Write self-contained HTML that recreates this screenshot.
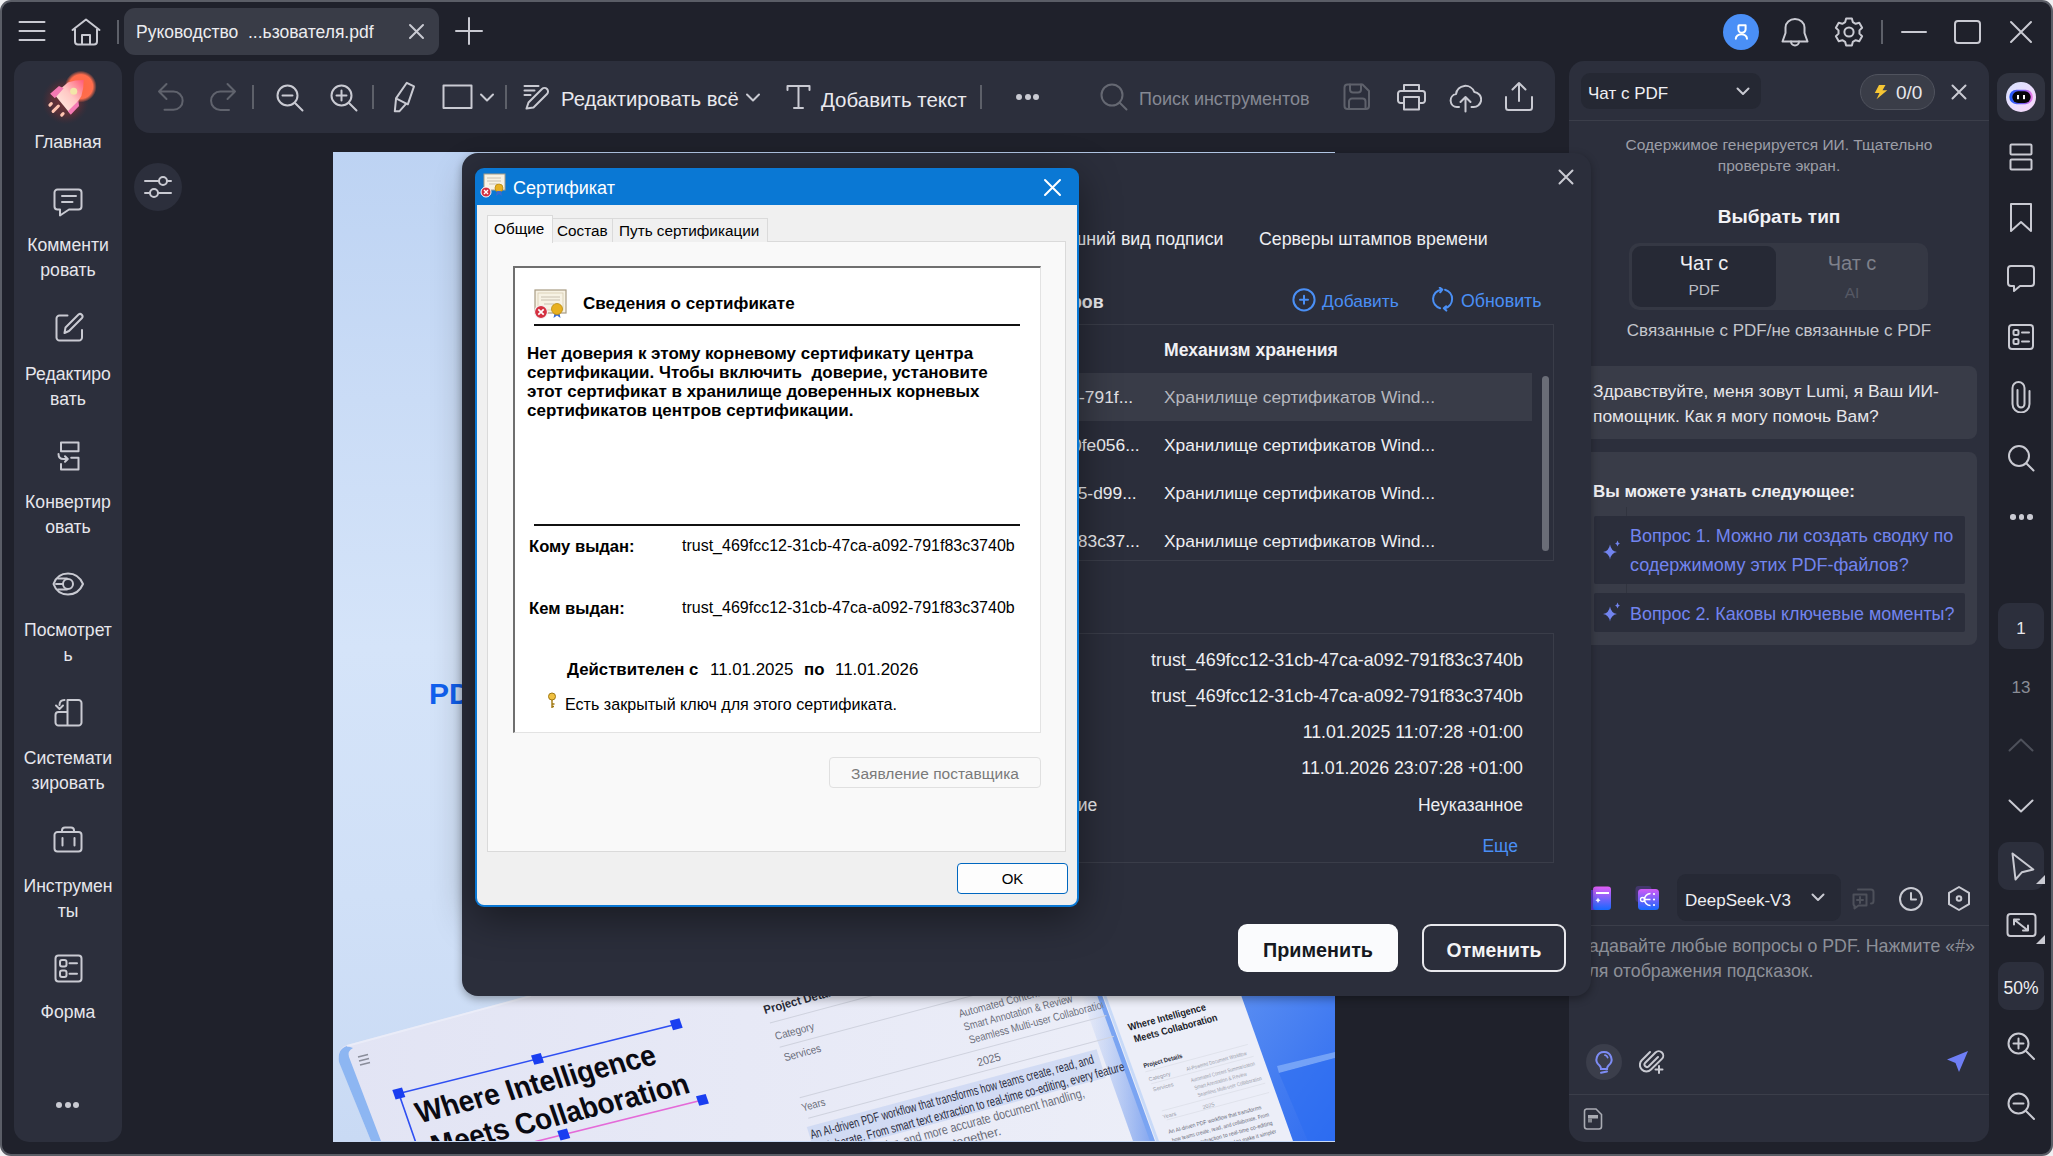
<!DOCTYPE html>
<html><head><meta charset="utf-8">
<style>
*{box-sizing:border-box;margin:0;padding:0}
html,body{width:2053px;height:1156px;overflow:hidden;background:#f0f0f2;font-family:"Liberation Sans",sans-serif}
.a{position:absolute}
#win{position:absolute;left:0;top:0;width:2053px;height:1156px;background:#1f212b;border:2px solid #5a5d66;border-radius:11px;overflow:hidden}
.ic{position:absolute;fill:none;stroke:#c9cad2;stroke-width:2;stroke-linecap:round;stroke-linejoin:round}
.t{position:absolute;white-space:pre;color:#e9e9ee}
.sbl{left:14px;width:108px;text-align:center;font-size:17.6px;color:#e6e6ec}
</style></head><body>
<div id="win">
</div>
<!-- everything positioned relative to body -->
<div class="a" style="left:0;top:0;width:2053px;height:1156px">

<!-- tab -->
<div class="a" style="left:124px;top:8px;width:315px;height:47px;background:#393c47;border-radius:11px"></div>

<!-- top bar -->
<svg class="ic" style="left:17px;top:20px" width="30" height="24" viewBox="0 0 30 24" stroke-width="2.4"><path d="M2.5 2h25M2.5 11h25M2.5 20h25"/></svg>
<svg class="ic" style="left:70px;top:16px" width="32" height="31" viewBox="0 0 32 31" stroke-width="2.2"><path d="M2.5 14L16 3.5 29.5 14M5 12V25.5a3 3 0 0 0 3 3h16a3 3 0 0 0 3-3V12M12 28.5V19h8v9.5"/></svg>
<div class="a" style="left:117px;top:20px;width:2px;height:24px;background:#5d6069"></div>
<div class="t" style="left:136px;top:22px;font-size:17.5px;color:#ececf0">Руководство  ...ьзователя.pdf</div>
<svg class="ic" style="left:408px;top:23px" width="17" height="17" viewBox="0 0 17 17" stroke-width="1.8"><path d="M2 2l13 13M15 2L2 15"/></svg>
<svg class="ic" style="left:454px;top:16px" width="30" height="30" viewBox="0 0 30 30" stroke-width="2.1"><path d="M15 2v26M2 15h26"/></svg>

<div class="a" style="left:1723px;top:14px;width:36px;height:36px;border-radius:50%;background:#4a8ff6"></div>
<svg class="ic" style="left:1729px;top:20px;stroke:#fff" width="24" height="24" viewBox="0 0 24 24" stroke-width="1.3"><path d="M10.3 5.2h6.3v4a3.6 3.6 0 0 1-7.2 0V6.2a1 1 0 0 1 .9-1z"/><path d="M6.8 18.8a5.6 4.6 0 0 1 11.2 0"/></svg>
<svg class="ic" style="left:1780px;top:17px" width="30" height="31" viewBox="0 0 30 31" stroke-width="1.9"><path d="M5.5 10.5A9.5 8.5 0 0 1 24.5 10.5V16l3 8.5H2.5l3-8.5z"/><path d="M11 24.5a4 4 0 0 0 8 0"/></svg>
<svg class="ic" style="left:1833px;top:16px" width="32" height="32" viewBox="0 0 32 32" stroke-width="1.9"><path d="M13.13 2.50 L18.87 2.50 L19.80 6.10 L22.67 7.76 L26.26 6.77 L29.12 11.74 L26.47 14.34 L26.47 17.66 L29.12 20.26 L26.26 25.23 L22.67 24.24 L19.80 25.90 L18.87 29.50 L13.13 29.50 L12.20 25.90 L9.33 24.24 L5.74 25.23 L2.88 20.26 L5.53 17.66 L5.53 14.34 L2.88 11.74 L5.74 6.77 L9.33 7.76 L12.20 6.10z"/><circle cx="16" cy="16" r="4.6"/></svg>
<div class="a" style="left:1881px;top:20px;width:2px;height:24px;background:#5d6069"></div>
<svg class="ic" style="left:1900px;top:30px" width="28" height="4" viewBox="0 0 28 4" stroke-width="2"><path d="M2 2h24"/></svg>
<svg class="ic" style="left:1953px;top:19px" width="29" height="26" viewBox="0 0 29 26" stroke-width="2"><rect x="2" y="2" width="25" height="22" rx="3"/></svg>
<svg class="ic" style="left:2009px;top:20px" width="24" height="24" viewBox="0 0 24 24" stroke-width="2"><path d="M2 2l20 20M22 2L2 22"/></svg>

<!-- left sidebar -->
<div class="a" style="left:14px;top:61px;width:108px;height:1081px;background:#2c2f3c;border-radius:15px"></div>

<!-- sidebar content -->
<svg class="a" style="left:36px;top:63px" width="66" height="66" viewBox="2 2 56 56">
<defs><radialGradient id="rg1" cx="0.5" cy="0.5" r="0.5"><stop offset="0" stop-color="#ff6845"/><stop offset="0.75" stop-color="#ff6d4c"/><stop offset="1" stop-color="#ff6d4c" stop-opacity="0"/></radialGradient>
<radialGradient id="rg2" cx="0.5" cy="0.5" r="0.5"><stop offset="0" stop-color="#7a3538" stop-opacity=".95"/><stop offset="0.6" stop-color="#6a3036" stop-opacity=".7"/><stop offset="1" stop-color="#4a2a34" stop-opacity="0"/></radialGradient>
<linearGradient id="lg1" x1="0" y1="1" x2="1" y2="0"><stop offset="0" stop-color="#fff6ea"/><stop offset="0.55" stop-color="#ffc8c4"/><stop offset="1" stop-color="#ff5a78"/></linearGradient></defs>
<circle cx="27" cy="34" r="20" fill="url(#rg2)"/>
<circle cx="40" cy="22" r="13.5" fill="url(#rg1)"/>
<path d="M17.5 28.5L29 18.5q6-2 13.5-2q0 7.5-2 13.5L31 45z" fill="url(#lg1)"/>
<path d="M14 28l7.5-6.5 4 2-7.5 8.5zM31.5 46l7-7.5-0.5-4.5-9 9z" fill="#f47ab4"/>
<circle cx="34" cy="26" r="3" fill="#f3e6a8"/>
<path d="M15 36.5l-1.2 1.2M21 38.5l-4.5 4.5M25 45l-1.2 1.2" stroke="#ffc4b0" stroke-width="2.6" stroke-linecap="round"/>
</svg>
<div class="t sbl" style="top:132px">Главная</div>
<svg class="ic" style="left:50px;top:185px" width="36" height="32" viewBox="0 0 36 32" stroke-width="2.5"><path d="M7.5 4.5h21a3 3 0 0 1 3 3v14a3 3 0 0 1-3 3H19l-9 6v-6H7.5a3 3 0 0 1-3-3v-14a3 3 0 0 1 3-3zM12 11h14M12 17h10.5"/></svg>
<div class="t sbl" style="top:233px;line-height:25px;text-align:center">Комменти<br>ровать</div>
<svg class="ic" style="left:52px;top:311px" width="34" height="33" viewBox="0 0 34 33" stroke-width="2.5"><path d="M15.5 4.5H7.5a3 3 0 0 0-3 3v19a3 3 0 0 0 3 3h19.5a3 3 0 0 0 3-3V19"/><path d="M12.5 22l1-5.5L26.5 3.5a2.5 2.5 0 0 1 3.5 3.5L17 20z"/></svg>
<div class="t sbl" style="top:362px;line-height:25px;text-align:center">Редактиро<br>вать</div>
<svg class="ic" style="left:52px;top:438px" width="32" height="36" viewBox="0 0 32 36" stroke-width="2.5"><path d="M9 4.6h17.5v8.7H9zM19.2 19.7h7.3v11.7H9V26"/><path d="M6.5 16c0 3 2 5 5 5h3.5M13 18.2l2.8 2.8-2.8 2.8"/></svg>
<div class="t sbl" style="top:490px;line-height:25px;text-align:center">Конвертир<br>овать</div>
<svg class="ic" style="left:50px;top:568px" width="36" height="32" viewBox="0 0 36 32" stroke-width="2.4"><path d="M3.5 16C6 9 11 5.5 18 5.5S30 9 33 16c-3 7-8 10.5-15 10.5S6 23 3.5 16z"/><circle cx="18" cy="16" r="5"/><path d="M8 10.5h9M6 16h7M8 21.5h9"/></svg>
<div class="t sbl" style="top:618px;line-height:25px;text-align:center">Посмотрет<br>ь</div>
<svg class="ic" style="left:52px;top:696px" width="33" height="32" viewBox="0 0 33 32" stroke-width="2.5"><path d="M15.5 4h11a3 3 0 0 1 3 3v19.5a3 3 0 0 1-3 3H6.5a3 3 0 0 1-3-3V19a3 3 0 0 1 3-3h9zM15.5 16v13.5"/><path d="M12.5 4c-3 0-5 2-5 5M4 9.5l3.5 3.5 3.5-3.5"/></svg>
<div class="t sbl" style="top:746px;line-height:25px;text-align:center">Системати<br>зировать</div>
<svg class="ic" style="left:50px;top:824px" width="36" height="32" viewBox="0 0 36 32" stroke-width="2.5"><path d="M7.5 8h21a3 3 0 0 1 3 3v13.5a3 3 0 0 1-3 3h-21a3 3 0 0 1-3-3V11a3 3 0 0 1 3-3zM12 8V6.5a3 3 0 0 1 3-3h6a3 3 0 0 1 3 3V8M12.5 14v7.5M24.5 14v7.5"/></svg>
<div class="t sbl" style="top:874px;line-height:25px;text-align:center">Инструмен<br>ты</div>
<svg class="ic" style="left:52px;top:952px" width="33" height="32" viewBox="0 0 33 32" stroke-width="2.5"><rect x="3.5" y="3.5" width="26" height="26" rx="3"/><rect x="8" y="8" width="6.5" height="6.5" rx="2"/><rect x="8" y="18.5" width="6.5" height="6.5" rx="2"/><path d="M17.5 11.2h7.5M17.5 21.7h7.5"/></svg>
<div class="t sbl" style="top:1002px">Форма</div>
<div class="a" style="left:56px;top:1102px;width:6px;height:6px;border-radius:50%;background:#c9cad2"></div>
<div class="a" style="left:64.5px;top:1102px;width:6px;height:6px;border-radius:50%;background:#c9cad2"></div>
<div class="a" style="left:73px;top:1102px;width:6px;height:6px;border-radius:50%;background:#c9cad2"></div>

<!-- toolbar -->
<div class="a" style="left:134px;top:61px;width:1421px;height:72px;background:#2c2f3c;border-radius:16px"></div>
<!-- filter btn -->
<div class="a" style="left:134px;top:163px;width:48px;height:48px;background:#2c2f3c;border-radius:50%"></div>

<!-- toolbar content -->
<svg class="ic" style="left:156px;top:82px;stroke:#60636d" width="30" height="32" viewBox="0 0 30 32" stroke-width="2"><path d="M10.5 2L3 9.5l7.5 7.5M3 9.5h14.5a9.15 9.15 0 0 1 0 18.3H8.5"/></svg>
<svg class="ic" style="left:208px;top:82px;stroke:#60636d" width="30" height="32" viewBox="0 0 30 32" stroke-width="2"><path d="M19.5 2L27 9.5l-7.5 7.5M27 9.5H12.3a9.25 9.25 0 0 0 0 18.5H21"/></svg>
<div class="a" style="left:252px;top:85px;width:2px;height:24px;background:#5d6069"></div>
<svg class="ic" style="left:275px;top:83px" width="30" height="30" viewBox="0 0 30 30" stroke-width="2"><circle cx="12.5" cy="12.5" r="10"/><path d="M7.5 12.5h10M20 20l7.5 7.5"/></svg>
<svg class="ic" style="left:329px;top:83px" width="30" height="30" viewBox="0 0 30 30" stroke-width="2"><circle cx="12.5" cy="12.5" r="10"/><path d="M7.5 12.5h10M12.5 7.5v10M20 20l7.5 7.5"/></svg>
<div class="a" style="left:372px;top:85px;width:2px;height:24px;background:#5d6069"></div>
<svg class="ic" style="left:392px;top:80px" width="28" height="36" viewBox="0 0 28 36" stroke-width="2"><path d="M14.8 2.8L22 6.3 15.8 24.3 4 18.4z"/><path d="M4 19L2.8 31.3H7.3L14 23.8"/></svg>
<svg class="ic" style="left:441px;top:83px" width="34" height="28" viewBox="0 0 34 28" stroke-width="2.2"><rect x="2.5" y="2.5" width="28" height="22.5"/></svg>
<svg class="ic" style="left:479px;top:92px" width="16" height="11" viewBox="0 0 16 11" stroke-width="1.8"><path d="M2 2.5l6 6 6-6"/></svg>
<div class="a" style="left:505px;top:85px;width:2px;height:24px;background:#5d6069"></div>
<svg class="ic" style="left:522px;top:83px" width="30" height="29" viewBox="0 0 30 29" stroke-width="2"><path d="M2.5 3h14M2.5 7.5h10M2.5 12h6M4.5 25.5l2-6L20 6a3.5 3.5 0 0 1 5 5L11.5 24.5z"/></svg>
<div class="t" style="left:561px;top:88px;font-size:20.3px">Редактировать всё</div>
<svg class="ic" style="left:745px;top:92px" width="16" height="11" viewBox="0 0 16 11" stroke-width="1.8"><path d="M2 2.5l6 6 6-6"/></svg>
<svg class="ic" style="left:785px;top:83px" width="27" height="28" viewBox="0 0 27 28" stroke-width="2"><path d="M2.5 7V3h22v4M13.5 3v22M9 25h9"/></svg>
<div class="t" style="left:821px;top:87.5px;font-size:20.5px">Добавить текст</div>
<div class="a" style="left:980px;top:85px;width:2px;height:24px;background:#5d6069"></div>
<div class="a" style="left:1016px;top:94px;width:6px;height:6px;border-radius:50%;background:#c9cad2"></div>
<div class="a" style="left:1024.5px;top:94px;width:6px;height:6px;border-radius:50%;background:#c9cad2"></div>
<div class="a" style="left:1033px;top:94px;width:6px;height:6px;border-radius:50%;background:#c9cad2"></div>
<svg class="ic" style="left:1099px;top:82px;stroke:#656872" width="32" height="30" viewBox="0 0 32 30" stroke-width="2"><circle cx="13" cy="13" r="10.5"/><path d="M20.5 20.5l7 7"/></svg>
<div class="t" style="left:1139px;top:89px;font-size:18px;color:#858893">Поиск инструментов</div>
<svg class="ic" style="left:1341px;top:82px;stroke:#5e616b" width="31" height="30" viewBox="0 0 31 30" stroke-width="2"><path d="M6.5 2.5h15l6.5 6.5v15a3 3 0 0 1-3 3H6.5a3 3 0 0 1-3-3V5.5a3 3 0 0 1 3-3z"/><path d="M9 2.5v5a3 3 0 0 0 3 3h5a3 3 0 0 0 3-3v-5M8 27v-7.5a3 3 0 0 1 3-3h10.5a3 3 0 0 1 3 3V27"/></svg>
<svg class="ic" style="left:1396px;top:82px" width="31" height="30" viewBox="0 0 31 30" stroke-width="2.2"><path d="M8 9V3h15v6M8 21H4.5A2.5 2.5 0 0 1 2 18.5v-7A2.5 2.5 0 0 1 4.5 9h22a2.5 2.5 0 0 1 2.5 2.5v7a2.5 2.5 0 0 1-2.5 2.5H23M8 15h15v12.5H8z"/></svg>
<svg class="ic" style="left:1449px;top:83px" width="33" height="31" viewBox="0 0 33 31" stroke-width="2"><path d="M10 24H8a6.5 6.5 0 0 1-1-12.9A9.5 9.5 0 0 1 25.3 9 7.5 7.5 0 0 1 24 24h-1.5M16.5 28.5V14M11.5 19l5-5 5 5"/></svg>
<svg class="ic" style="left:1503px;top:80px" width="32" height="33" viewBox="0 0 32 33" stroke-width="2.2"><path d="M16 21V3M9.5 9.5L16 3l6.5 6.5M3 17v10.5A2.5 2.5 0 0 0 5.5 30h21a2.5 2.5 0 0 0 2.5-2.5V17"/></svg>
<!-- filter -->
<svg class="ic" style="left:143px;top:173px" width="30" height="28" viewBox="0 0 30 28" stroke-width="2"><path d="M2 8h26M2 20h26"/><circle cx="20" cy="8" r="4" fill="#2c2f3c"/><circle cx="11" cy="20" r="4" fill="#2c2f3c"/></svg>

<!-- pdf page -->
<div class="a" id="pdf" style="left:333px;top:152px;width:1002px;height:990px;background:linear-gradient(180deg,#bdd3f3 0%,#cadcf6 25%,#d5e4f9 50%,#d0e0f7 75%,#c9daf4 100%);overflow:hidden">
<div class="t" style="left:96px;top:525px;font-size:30px;font-weight:700;color:#1060ee">PDF</div>
<svg class="a" style="left:0;top:0" width="1002" height="989" viewBox="0 0 1002 989">
<defs>
<linearGradient id="cardg" x1="0" y1="0" x2="1" y2="0"><stop offset="0" stop-color="#e2e4f4"/><stop offset="1" stop-color="#eceef8"/></linearGradient>
<linearGradient id="blueg" x1="0" y1="0" x2="1" y2="1"><stop offset="0" stop-color="#5a8ef2"/><stop offset="1" stop-color="#2f6cf0"/></linearGradient>
<linearGradient id="selg" x1="0" y1="0" x2="1" y2="0"><stop offset="0" stop-color="#2a4ef0"/><stop offset="1" stop-color="#e070d0"/></linearGradient>
</defs>
<!-- blue bg right -->
<path d="M900 843H1002V989H950z" fill="url(#blueg)"/>
<path d="M944 914L1002 900V906L946 921z" fill="#86b0f8" opacity=".75"/><path d="M946 921L1002 906V989H975z" fill="#2a6cf2" opacity=".5"/>
<!-- main card -->
<path d="M14 893Q4 896 6 909L38 989H820L768 843H198z" fill="url(#cardg)"/>
<path d="M14 894Q4 897 6 910L38 989H48L16 905Q14 899 20 896z" fill="#8db6f2"/>
<path d="M14 894L198 844" stroke="#eef0fa" stroke-width="2" opacity=".7"/>
<!-- right card -->
<defs><linearGradient id="rcsh" x1="0" y1="0" x2="1" y2="0"><stop offset="0" stop-color="#8fb0f0" stop-opacity="0"/><stop offset="1" stop-color="#6f98ee" stop-opacity=".9"/></linearGradient></defs>
<path d="M748 843H770L823 989H800z" fill="url(#rcsh)"/>
<path d="M766 843H908L960 989H818z" fill="#eceef8"/>
<path d="M764 843h5L822 989h-5z" fill="#7aa4f2"/>
<path d="M770 843h3L826 989h-3z" fill="#c8daf8"/>
<!-- menu icon -->
<path d="M25 905l10-2.5M26 909l10-2.5M27 913l10-2.5" stroke="#8a8d9a" stroke-width="1.5"/>
<!-- headline with skew frame -->
<g transform="matrix(0.970,-0.242,0.328,0.945,65.8,941.5)">
<defs><linearGradient id="selr" x1="0" y1="0" x2="0" y2="1"><stop offset="0" stop-color="#4a5af0"/><stop offset="1" stop-color="#e46ad8"/></linearGradient></defs><path d="M0 80V0H286" fill="none" stroke="#2f4ff2" stroke-width="1.6"/><path d="M286 0V80" fill="none" stroke="url(#selr)" stroke-width="1.6"/><path d="M286 80H0" fill="none" stroke="#e46ad8" stroke-width="1.6"/>
<text x="10" y="34" font-family="Liberation Sans" font-weight="700" font-size="30" textLength="246" lengthAdjust="spacingAndGlyphs" fill="#0a0a12">Where Intelligence</text>
<text x="14" y="70" font-family="Liberation Sans" font-weight="700" font-size="30" textLength="264" lengthAdjust="spacingAndGlyphs" fill="#0a0a12">Meets Collaboration</text>
<rect x="-5" y="-5" width="10" height="10" fill="#1a3ef0"/><rect x="138" y="-5" width="10" height="10" fill="#1a3ef0"/><rect x="281" y="-5" width="10" height="10" fill="#1a3ef0"/>
<rect x="281" y="75" width="10" height="10" fill="#1a3ef0"/><rect x="138" y="75" width="10" height="10" fill="#1a3ef0"/>
</g>
<!-- table area -->
<defs><clipPath id="mainclip"><path d="M0 843H766L818 989H0z"/></clipPath></defs>
<g clip-path="url(#mainclip)"><g transform="matrix(0.966,-0.259,0.30,0.954,432,862)" font-family="Liberation Sans" fill="#6a6d7a">
<text x="0" y="0" font-size="12" font-weight="700" fill="#2a2c38" textLength="78" lengthAdjust="spacingAndGlyphs">Project Details</text>
<path d="M2 10H330M4 36H335M8 90H345M10 112H350" stroke="#cfd2de" stroke-width="1"/>
<text x="3" y="28" font-size="11" textLength="40" lengthAdjust="spacingAndGlyphs">Category</text>
<text x="5" y="51" font-size="11" textLength="38" lengthAdjust="spacingAndGlyphs">Services</text>
<text x="7" y="104" font-size="11" textLength="24" lengthAdjust="spacingAndGlyphs">Years</text>
<text x="185" y="28" font-size="11" textLength="140" lengthAdjust="spacingAndGlyphs">AI-Powered Document Workflow</text>
<text x="185" y="54" font-size="11" textLength="150" lengthAdjust="spacingAndGlyphs">Automated Content Summarization</text>
<text x="186" y="68" font-size="11" textLength="112" lengthAdjust="spacingAndGlyphs">Smart Annotation &amp; Review</text>
<text x="187" y="82" font-size="11" textLength="142" lengthAdjust="spacingAndGlyphs">Seamless Multi-user Collaboration</text>
<text x="188" y="106" font-size="11.5" textLength="24" lengthAdjust="spacingAndGlyphs">2025</text>
<rect x="6" y="120" width="300" height="30" fill="#c8d4f2" opacity=".7"/>
<text x="7" y="133" font-size="13" fill="#2a2c40" textLength="293" lengthAdjust="spacingAndGlyphs">An AI-driven PDF workflow that transforms how teams create, read, and</text>
<text x="9" y="148" font-size="13" fill="#2a2c40" textLength="318" lengthAdjust="spacingAndGlyphs">collaborate. From smart text extraction to real-time co-editing, every feature</text>
<text x="11" y="163" font-size="13" textLength="270" lengthAdjust="spacingAndGlyphs">makes it simpler, and more accurate document handling,</text>
<text x="70" y="178" font-size="12.5" textLength="120" lengthAdjust="spacingAndGlyphs">and smarter together.</text>
</g>
</g>
<!-- right card text -->
<g transform="matrix(0.966,-0.259,0.30,0.954,795,878)" font-family="Liberation Sans">
<text x="1" y="1" font-size="10" font-weight="700" fill="#1a1c28" textLength="80" lengthAdjust="spacingAndGlyphs">Where Intelligence</text>
<text x="3" y="14" font-size="10" font-weight="700" fill="#1a1c28" textLength="86" lengthAdjust="spacingAndGlyphs">Meets Collaboration</text>
<text x="4" y="41" font-size="6.5" font-weight="700" fill="#2a2c38" textLength="40" lengthAdjust="spacingAndGlyphs">Project Details</text>
<path d="M4 45H110M6 58H112M8 87H115M10 97H116" stroke="#dcdee8" stroke-width=".7"/>
<g font-size="5.5" fill="#9a9daa">
<text x="5" y="55">Category</text>
<text x="44" y="55" textLength="62" lengthAdjust="spacingAndGlyphs">AI-Powered Document Workflow</text>
<text x="6" y="66">Services</text>
<text x="45" y="67" textLength="66" lengthAdjust="spacingAndGlyphs">Automated Content Summarization</text>
<text x="46" y="75" textLength="54" lengthAdjust="spacingAndGlyphs">Smart Annotation &amp; Review</text>
<text x="47" y="83" textLength="66" lengthAdjust="spacingAndGlyphs">Seamless Multi-user Collaboration</text>
<text x="48" y="96">2025</text>
<text x="7" y="95">Years</text>
</g>
<g font-size="5.8" fill="#6a6d7a">
<text x="8" y="111" textLength="96" lengthAdjust="spacingAndGlyphs">An AI-driven PDF workflow that transforms</text>
<text x="9" y="120" textLength="100" lengthAdjust="spacingAndGlyphs">how teams create, read, and collaborate. From</text>
<text x="10" y="129" textLength="100" lengthAdjust="spacingAndGlyphs">smart text extraction to real-time co-editing</text>
<text x="11" y="138" textLength="100" lengthAdjust="spacingAndGlyphs">every feature is designed to make it simpler</text>
</g>
</g>
</svg>
</div>
<!-- chat panel -->
<div class="a" style="left:1569px;top:61px;width:420px;height:1081px;background:#2c2f3c;border-radius:15px"></div>

<!-- chat content -->
<div class="a" style="left:1581px;top:73px;width:180px;height:36px;background:#252833;border-radius:9px"></div>
<div class="t" style="left:1588px;top:83.5px;font-size:17px;color:#f0f0f4">Чат с PDF</div>
<svg class="ic" style="left:1735px;top:86px" width="16" height="11" viewBox="0 0 16 11" stroke-width="1.7"><path d="M2.5 2.5l5.5 5.5 5.5-5.5"/></svg>
<div class="a" style="left:1860px;top:74px;width:75px;height:36px;border:1.5px solid #50535e;border-radius:18px;background:#3a3d48"></div>
<svg class="a" style="left:1872px;top:83px" width="17" height="18" viewBox="0 0 17 18"><path d="M7 1.9h6.5l-3 5.3h4.8L4.5 16.3 7.5 10H2.8z" fill="#f6c634"/></svg>
<div class="t" style="left:1896px;top:82px;font-size:19px;color:#e8e8ec">0/0</div>
<svg class="ic" style="left:1950px;top:83px" width="18" height="18" viewBox="0 0 18 18" stroke-width="1.5"><path d="M2.5 2.5l13 13M15.5 2.5l-13 13"/></svg>
<div class="a" style="left:1569px;top:120px;width:420px;height:1px;background:#3b3e4a"></div>
<div class="t" style="left:1569px;width:420px;top:133.5px;font-size:15.5px;color:#9c9ea7;text-align:center;line-height:21px">Содержимое генерируется ИИ. Тщательно<br>проверьте экран.</div>
<div class="t" style="left:1569px;width:420px;top:205.5px;font-size:19px;font-weight:700;color:#f2f2f5;text-align:center">Выбрать тип</div>
<div class="a" style="left:1629px;top:243px;width:299px;height:67px;background:#353844;border-radius:10px"></div>
<div class="a" style="left:1632px;top:246px;width:144px;height:61px;background:#262935;border-radius:9px"></div>
<div class="t" style="left:1632px;width:144px;top:251.5px;font-size:20px;color:#f0f0f4;text-align:center">Чат с</div>
<div class="t" style="left:1632px;width:144px;top:280.5px;font-size:15.5px;color:#b9bbc3;text-align:center">PDF</div>
<div class="t" style="left:1779px;width:146px;top:251.5px;font-size:20px;color:#7e818b;text-align:center">Чат с</div>
<div class="t" style="left:1779px;width:146px;top:283.5px;font-size:15.5px;color:#565964;text-align:center">AI</div>
<div class="t" style="left:1569px;width:420px;top:320.5px;font-size:17px;color:#c4c6cc;text-align:center">Связанные с PDF/не связанные с PDF</div>
<div class="a" style="left:1581px;top:366px;width:396px;height:73px;background:#393c48;border-radius:8px"></div>
<div class="t" style="left:1593px;top:379px;font-size:17.4px;line-height:25px;color:#e6e6ea">Здравствуйте, меня зовут Lumi, я Ваш ИИ-<br>помощник. Как я могу помочь Вам?</div>
<div class="a" style="left:1581px;top:452px;width:396px;height:193px;background:#393c48;border-radius:8px"></div>
<div class="t" style="left:1593px;top:482px;font-size:17px;font-weight:700;color:#eeeef2">Вы можете узнать следующее:</div>
<div class="a" style="left:1626px;top:507px;width:1px;height:87px;background:#31343f"></div>
<div class="a" style="left:1594px;top:516px;width:371px;height:68px;background:#2b2e3b;border-radius:2px"></div>
<div class="a" style="left:1594px;top:593px;width:371px;height:39px;background:#2b2e3b;border-radius:2px"></div>
<svg class="a" style="left:1602px;top:538px" width="20" height="24" viewBox="0 0 20 24"><path d="M8 6.5Q9 13 15 14Q9 15 8 21.5Q7 15 1 14Q7 13 8 6.5z" fill="#7284ef"/><path d="M15.5 2.5Q16 5 18 5.5Q16 6 15.5 8.5Q15 6 13 5.5Q15 5 15.5 2.5z" fill="#7284ef"/></svg>
<svg class="a" style="left:1602px;top:600px" width="20" height="24" viewBox="0 0 20 24"><path d="M8 6.5Q9 13 15 14Q9 15 8 21.5Q7 15 1 14Q7 13 8 6.5z" fill="#7284ef"/><path d="M15.5 2.5Q16 5 18 5.5Q16 6 15.5 8.5Q15 6 13 5.5Q15 5 15.5 2.5z" fill="#7284ef"/></svg>
<div class="t" style="left:1630px;top:522px;font-size:18px;line-height:29px;color:#7284ef">Вопрос 1. Можно ли создать сводку по<br>содержимому этих PDF-файлов?</div>
<div class="t" style="left:1630px;top:604px;font-size:17.9px;color:#7284ef">Вопрос 2. Каковы ключевые моменты?</div>

<!-- chat bottom -->
<svg class="a" style="left:1586px;top:884px" width="28" height="28" viewBox="0 0 28 28"><defs><linearGradient id="pg1" x1="0" y1="0" x2="0" y2="1"><stop offset="0" stop-color="#e35ef6"/><stop offset="1" stop-color="#1668ff"/></linearGradient></defs><path d="M4 6h6v20H4z" fill="#5a3ad0"/><rect x="7" y="2.5" width="18" height="23.5" rx="3" fill="url(#pg1)"/><rect x="10" y="8" width="13" height="2" fill="#fff"/><path d="M12 13.5q.5 2.3 2.5 2.8q-2 .5-2.5 2.8q-.5-2.3-2.5-2.8q2-.5 2.5-2.8z" fill="#fff"/></svg>
<svg class="a" style="left:1634px;top:884px" width="28" height="28" viewBox="0 0 28 28"><defs><linearGradient id="pg2" x1="0" y1="0" x2="0" y2="1"><stop offset="0" stop-color="#d25af6"/><stop offset="1" stop-color="#1668ff"/></linearGradient></defs><rect x="1.5" y="2" width="16" height="16" rx="3" fill="#4a3a78" opacity=".8"/><rect x="4" y="5" width="21" height="21" rx="3.5" fill="url(#pg2)"/><circle cx="8.5" cy="15.5" r="2" fill="none" stroke="#fff" stroke-width="1.3"/><path d="M16.5 9.5a6 6 0 0 0 0 12M10.5 15.5h6" fill="none" stroke="#fff" stroke-width="1.6"/><circle cx="20" cy="10" r="1.1" fill="#fff"/><circle cx="20" cy="15.5" r="1.1" fill="#fff"/><circle cx="20" cy="21" r="1.1" fill="#fff"/></svg>
<div class="a" style="left:1677px;top:874px;width:164px;height:47px;background:#262935;border-radius:9px"></div>
<div class="t" style="left:1685px;top:890.5px;font-size:17px;color:#eeeef2">DeepSeek-V3</div>
<svg class="ic" style="left:1810px;top:892px" width="16" height="11" viewBox="0 0 16 11" stroke-width="1.7"><path d="M2.5 2.5l5.5 5.5 5.5-5.5"/></svg>
<svg class="ic" style="left:1849px;top:884px;stroke:#4d505a" width="28" height="28" viewBox="0 0 28 28" stroke-width="1.8"><path d="M9 5.5h13a2.5 2.5 0 0 1 2.5 2.5v9a2.5 2.5 0 0 1-2.5 2.5M4.5 10.5h13v11h-8l-4 3v-3a1 1 0 0 1-1-1zM11 13v6M8 16h6"/></svg>
<svg class="ic" style="left:1898px;top:886px" width="26" height="26" viewBox="0 0 26 26" stroke-width="1.9"><circle cx="13" cy="13" r="11"/><path d="M13 7v6.5h5"/></svg>
<svg class="ic" style="left:1946px;top:885px" width="26" height="27" viewBox="0 0 26 27" stroke-width="1.9"><path d="M13 2l10 5.8v11.4L13 25 3 19.2V7.8z"/><circle cx="13" cy="13.5" r="2.3"/></svg>
<div class="a" style="left:1569px;top:925px;width:420px;height:1px;background:#3b3e4a"></div>
<div class="t" style="left:1578px;top:934px;font-size:17.8px;line-height:25px;color:#8c8f98">Задавайте любые вопросы о PDF. Нажмите «#»<br>для отображения подсказок.</div>
<div class="a" style="left:1586px;top:1044px;width:36px;height:36px;border-radius:50%;background:#3b3e4b"></div>
<svg class="a" style="left:1593px;top:1049px" width="22" height="27" viewBox="0 0 22 27"><path d="M11 3a7.5 7.5 0 0 0-4.5 13.5c1 1 1.5 2 1.5 3.5h6c0-1.5.5-2.5 1.5-3.5A7.5 7.5 0 0 0 11 3z" fill="none" stroke="#7d8cf4" stroke-width="2"/><path d="M12 6.2a3.5 3.5 0 0 1 2.6 2.4" fill="none" stroke="#7d8cf4" stroke-width="1.8" stroke-linecap="round"/><path d="M8 23.8l6-1.3" stroke="#7d8cf4" stroke-width="2" stroke-linecap="round"/></svg>
<svg class="ic" style="left:1639px;top:1048px" width="28" height="28" viewBox="0 0 28 28" stroke-width="1.9"><path d="M19 9l-9.5 9.5a2.5 2.5 0 0 1-3.5-3.5L16.5 4.5a4.5 4.5 0 0 1 6.4 6.4L12 21.5a6.5 6.5 0 0 1-9.2-9.2L11 4M20 18v7M16.5 21.5h7"/></svg>
<svg class="a" style="left:1945px;top:1049px" width="25" height="25" viewBox="0 0 25 25"><path d="M23 2L2 10.5l8.5 3.5 3.5 9z" fill="#6f7ef5"/></svg>
<div class="a" style="left:1569px;top:1094px;width:420px;height:1px;background:#3b3e4a"></div>
<svg class="a" style="left:1582px;top:1107px" width="22" height="25" viewBox="0 0 22 25"><path d="M4.5 2h9.5l5.5 5.5v12a2.5 2.5 0 0 1-2.5 2.5h-12A2.5 2.5 0 0 1 2.5 19.5V4.5A2.5 2.5 0 0 1 4.5 2z" fill="none" stroke="#a9abb3" stroke-width="1.6"/><rect x="6" y="8" width="10" height="3.5" fill="#a9abb3"/><rect x="6" y="11.5" width="4" height="4" fill="#85888f"/></svg>

<!-- right bar -->
<div class="a" style="left:1997px;top:73px;width:48px;height:48px;background:#30333f;border-radius:12px"></div>
<svg class="a" style="left:2005px;top:81px" width="32" height="32" viewBox="0 0 32 32"><defs><linearGradient id="bg1" x1="0" y1="0" x2="1" y2="1"><stop offset="0" stop-color="#d8e2ff"/><stop offset="1" stop-color="#f8d8fa"/></linearGradient><linearGradient id="bg2" x1="0" y1="0" x2="1" y2="0"><stop offset="0" stop-color="#1858f8"/><stop offset=".6" stop-color="#7a5af0"/><stop offset="1" stop-color="#f47ae6"/></linearGradient></defs><circle cx="16" cy="16" r="15" fill="url(#bg1)"/><rect x="4.3" y="8.7" width="23.6" height="14.5" rx="7.25" fill="url(#bg2)"/><rect x="7.3" y="10.2" width="18.4" height="11.7" rx="5.85" fill="#050508"/><rect x="12" y="14" width="2" height="4.2" fill="#fff"/><rect x="18" y="14" width="2" height="4.2" fill="#fff"/></svg>
<svg class="ic" style="left:2007px;top:141px" width="28" height="32" viewBox="0 0 28 32" stroke-width="2.2"><rect x="3.5" y="3.5" width="21" height="10" rx="1"/><rect x="3.5" y="18.5" width="21" height="10" rx="1"/></svg>
<svg class="ic" style="left:2007px;top:201px" width="28" height="33" viewBox="0 0 28 33" stroke-width="2.2"><path d="M4 3h20v27l-10-9-10 9z"/></svg>
<svg class="ic" style="left:2005px;top:262px" width="32" height="32" viewBox="0 0 32 32" stroke-width="2.2"><path d="M6 4h20a3 3 0 0 1 3 3v14a3 3 0 0 1-3 3H15l-6 5v-5H6a3 3 0 0 1-3-3V7a3 3 0 0 1 3-3z"/></svg>
<svg class="ic" style="left:2006px;top:322px" width="30" height="30" viewBox="0 0 30 30" stroke-width="2.2"><rect x="3" y="3" width="24" height="24" rx="3"/><rect x="7.5" y="8" width="5" height="5" rx="1.5"/><rect x="7.5" y="17" width="5" height="5" rx="1.5"/><path d="M16 10.5h7M16 19.5h7"/></svg>
<svg class="ic" style="left:2007px;top:381px" width="28" height="32" viewBox="0 0 28 32" stroke-width="2.2"><path d="M10.5 9v14a3.5 3.5 0 0 0 7 0V7a6 6 0 0 0-12 0v16a8.5 8.5 0 0 0 17 0V10"/></svg>
<svg class="ic" style="left:2006px;top:443px" width="30" height="30" viewBox="0 0 30 30" stroke-width="2.2"><circle cx="13" cy="13" r="10"/><path d="M20.5 20.5l7 7"/></svg>
<div class="a" style="left:2010px;top:514px;width:5.5px;height:5.5px;border-radius:50%;background:#c9cad2"></div>
<div class="a" style="left:2018.5px;top:514px;width:5.5px;height:5.5px;border-radius:50%;background:#c9cad2"></div>
<div class="a" style="left:2027px;top:514px;width:5.5px;height:5.5px;border-radius:50%;background:#c9cad2"></div>
<div class="a" style="left:1998px;top:603px;width:46px;height:46px;background:#2c2f3c;border-radius:11px"></div>
<div class="t" style="left:1998px;width:46px;top:618.5px;font-size:17px;color:#e8e8ec;text-align:center">1</div>
<div class="t" style="left:1998px;width:46px;top:678px;font-size:17px;color:#8a8d96;text-align:center">13</div>
<svg class="ic" style="left:2007px;top:736px;stroke:#4e515b" width="28" height="18" viewBox="0 0 28 18" stroke-width="2"><path d="M2.5 14.5L14 3.5l11.5 11"/></svg>
<svg class="ic" style="left:2007px;top:797px" width="28" height="18" viewBox="0 0 28 18" stroke-width="2"><path d="M2.5 3.5L14 14.5l11.5-11"/></svg>
<div class="a" style="left:1998px;top:842px;width:46px;height:48px;background:#2c2f3c;border-radius:11px"></div>
<svg class="ic" style="left:2008px;top:850px" width="28" height="32" viewBox="0 0 28 32" stroke-width="2"><path d="M4.5 3.5L25.3 19.5 13.8 22.3 7.5 29.5z"/></svg>
<svg class="a" style="left:2036px;top:875px" width="9" height="9" viewBox="0 0 9 9"><path d="M9 0v9H0z" fill="#c9cad2"/></svg>
<svg class="ic" style="left:2005px;top:911px" width="33" height="29" viewBox="0 0 33 29" stroke-width="2"><rect x="2.5" y="3" width="28" height="22" rx="3"/><path d="M9 8.5l14 11M9 8.5h5M9 8.5v5M23 19.5h-5M23 19.5v-5"/></svg>
<svg class="a" style="left:2036px;top:935px" width="9" height="9" viewBox="0 0 9 9"><path d="M9 0v9H0z" fill="#c9cad2"/></svg>
<div class="a" style="left:1998px;top:962px;width:46px;height:48px;background:#2c2f3c;border-radius:11px"></div>
<div class="t" style="left:1998px;width:46px;top:978px;font-size:17.5px;color:#eeeef2;text-align:center">50%</div>
<svg class="ic" style="left:2006px;top:1031px" width="31" height="31" viewBox="0 0 31 31" stroke-width="2"><circle cx="12.5" cy="12.5" r="10"/><path d="M7.5 12.5h10M12.5 7.5v10M20 20l8 8"/></svg>
<svg class="ic" style="left:2006px;top:1091px" width="31" height="31" viewBox="0 0 31 31" stroke-width="2"><circle cx="12.5" cy="12.5" r="10"/><path d="M7.5 12.5h10M20 20l8 8"/></svg>

<!-- settings dialog -->
<div class="a" id="dlg" style="left:462px;top:153px;width:1129px;height:843px;background:#2b2e3b;border-radius:16px;box-shadow:0 3px 9px rgba(0,0,0,.32)"></div>
<!-- settings dialog content -->
<svg class="ic" style="left:1557px;top:168px" width="18" height="18" viewBox="0 0 18 18" stroke-width="1.5"><path d="M2.5 2.5l13 13M15.5 2.5l-13 13"/></svg>
<div class="t" style="left:1072px;top:229px;font-size:17.8px;color:#eeeef2">шний вид подписи</div>
<div class="t" style="left:1259px;top:229px;font-size:17.8px;color:#eeeef2">Серверы штампов времени</div>
<div class="t" style="left:1071px;top:292px;font-size:17.8px;font-weight:700;color:#eeeef2">ров</div>
<svg class="ic" style="left:1291px;top:287px;stroke:#4a8ff5" width="26" height="26" viewBox="0 0 26 26" stroke-width="1.6"><circle cx="13" cy="12.8" r="10.6"/><path d="M13 8.8v8M9 12.8h8"/></svg>
<div class="t" style="left:1322px;top:291px;font-size:17.4px;color:#4a8ff5">Добавить</div>
<svg class="ic" style="left:1431px;top:287px;stroke:#4a8ff5" width="24" height="25" viewBox="0 0 24 25" stroke-width="1.6"><path d="M9.14 21.18A9.5 9.5 0 0 1 9.95 2.64M14.06 2.82A9.5 9.5 0 0 1 14.06 21.18"/><path d="M8.8 .6L11.3 2.6 9.2 5.3M15.1 19.2L12.8 21.3 15.3 23.6"/></svg>
<div class="t" style="left:1461px;top:291px;font-size:17.8px;color:#4a8ff5">Обновить</div>
<div class="a" style="left:1050px;top:324px;width:504px;height:237px;border:1px solid #3a3d49"></div>
<div class="t" style="left:1164px;top:340px;font-size:17.6px;font-weight:700;color:#f0f0f4">Механизм хранения</div>
<div class="a" style="left:1051px;top:373px;width:481px;height:48px;background:#393c48"></div>
<div class="t" style="left:1079px;top:387px;font-size:17.4px;color:#e4e4e8">-791f...</div>
<div class="t" style="left:1164px;top:387px;font-size:17.4px;color:#b5b7be">Хранилище сертификатов Wind...</div>
<div class="t" style="left:1072px;top:435px;font-size:17.4px;color:#eeeef2">0fe056...</div>
<div class="t" style="left:1164px;top:435px;font-size:17.4px;color:#eeeef2">Хранилище сертификатов Wind...</div>
<div class="t" style="left:1068px;top:483px;font-size:17.4px;color:#eeeef2">15-d99...</div>
<div class="t" style="left:1164px;top:483px;font-size:17.4px;color:#eeeef2">Хранилище сертификатов Wind...</div>
<div class="t" style="left:1073px;top:531px;font-size:17.4px;color:#eeeef2">f83c37...</div>
<div class="t" style="left:1164px;top:531px;font-size:17.4px;color:#eeeef2">Хранилище сертификатов Wind...</div>
<div class="a" style="left:1542px;top:376px;width:7px;height:175px;background:#6a6d77;border-radius:4px"></div>
<div class="a" style="left:1050px;top:633px;width:504px;height:230px;border:1px solid #3a3d49"></div>
<div class="t" style="right:530px;top:650px;font-size:17.9px;color:#eeeef2;text-align:right">trust_469fcc12-31cb-47ca-a092-791f83c3740b</div>
<div class="t" style="right:530px;top:686px;font-size:17.9px;color:#eeeef2;text-align:right">trust_469fcc12-31cb-47ca-a092-791f83c3740b</div>
<div class="t" style="right:530px;top:722px;font-size:17.8px;color:#eeeef2;text-align:right">11.01.2025 11:07:28 +01:00</div>
<div class="t" style="right:530px;top:758px;font-size:17.8px;color:#eeeef2;text-align:right">11.01.2026 23:07:28 +01:00</div>
<div class="t" style="right:530px;top:794.5px;font-size:17.5px;color:#eeeef2;text-align:right">Неуказанное</div>
<div class="t" style="left:1068px;top:794.5px;font-size:17.5px;color:#eeeef2">ние</div>
<div class="t" style="right:535px;top:835.5px;font-size:17.5px;color:#4a8ff5;text-align:right">Еще</div>
<div class="a" style="left:1238px;top:924px;width:160px;height:48px;background:#fafbfd;border-radius:9px"></div>
<div class="t" style="left:1238px;width:160px;top:939px;font-size:19.8px;font-weight:700;color:#151820;text-align:center">Применить</div>
<div class="a" style="left:1422px;top:924px;width:144px;height:48px;border:2px solid #e8e8ec;border-radius:9px"></div>
<div class="t" style="left:1422px;width:144px;top:939px;font-size:19.4px;font-weight:700;color:#f4f4f6;text-align:center">Отменить</div>

<!-- cert window -->
<div class="a" style="left:475px;top:168px;width:604px;height:739px;background:#0a78d4;border-radius:9px;box-shadow:0 10px 40px rgba(0,0,0,.45)"></div>
<div class="a" style="left:477px;top:205px;width:600px;height:700px;background:#f0f0f0;border-radius:0 0 7px 7px"></div>
<svg class="a" style="left:480px;top:173px" width="26" height="25" viewBox="0 0 26 25"><rect x="4" y="1" width="21" height="16" fill="#f7f2e4" stroke="#a89c84" stroke-width="1"/><path d="M7 5h14M7 8h14M9 11h9" stroke="#c9c0b0" stroke-width="1"/><circle cx="19" cy="15" r="4" fill="#e8b020" stroke="#b88a10" stroke-width=".8"/><path d="M17 18l-1 5 3-2 3 2-1-5" fill="#3a6ad0"/><circle cx="6" cy="19" r="5" fill="#d43040" stroke="#fff" stroke-width="1"/><path d="M4 17l4 4M8 17l-4 4" stroke="#fff" stroke-width="1.4"/></svg>
<div class="t" style="left:513px;top:178px;font-size:18px;color:#ffffff">Сертификат</div>
<svg class="ic" style="left:1043px;top:178px;stroke:#fff" width="19" height="19" viewBox="0 0 19 19" stroke-width="1.6"><path d="M2 2l15 15M17 2L2 17"/></svg>
<!-- tabs -->
<div class="a" style="left:487px;top:241px;width:579px;height:611px;background:#f9f9f9;border:1px solid #dadada"></div>
<div class="a" style="left:552px;top:218px;width:61px;height:24px;background:#f0f0f0;border:1px solid #dadada;border-bottom:none"></div>
<div class="a" style="left:612px;top:218px;width:156px;height:24px;background:#f0f0f0;border:1px solid #dadada;border-bottom:none"></div>
<div class="a" style="left:487px;top:215px;width:66px;height:28px;background:#f9f9f9;border:1px solid #dadada;border-bottom:none"></div>
<div class="t" style="left:494px;top:220px;font-size:15.3px;color:#000">Общие</div>
<div class="t" style="left:557px;top:222px;font-size:15.3px;color:#000">Состав</div>
<div class="t" style="left:619px;top:222px;font-size:15.3px;color:#000">Путь сертификации</div>
<!-- info box -->
<div class="a" style="left:513px;top:266px;width:528px;height:467px;background:#fff;border-top:2px solid #6f6f6f;border-left:2px solid #6f6f6f;border-right:1px solid #e3e3e3;border-bottom:1px solid #e3e3e3"></div>
<svg class="a" style="left:532px;top:288px" width="36" height="32" viewBox="0 0 36 32"><rect x="3" y="2" width="31" height="23" fill="#f7f2e4" stroke="#a89c84" stroke-width="1.2"/><rect x="6" y="5" width="25" height="17" fill="none" stroke="#d8ccb0" stroke-width=".8"/><path d="M9 9h19M9 12h19M12 16h10" stroke="#c9c0b0" stroke-width="1"/><path d="M23 23l-1.5 7 3.5-2.5 3.5 2.5-1.5-7" fill="#3a6ad0"/><circle cx="25" cy="21" r="5.5" fill="#e8b020" stroke="#b88a10" stroke-width=".8"/><circle cx="9" cy="24" r="6.5" fill="#d43040" stroke="#f4f4f4" stroke-width="1.2"/><path d="M6.3 21.3l5.4 5.4M11.7 21.3l-5.4 5.4" stroke="#fff" stroke-width="1.7"/></svg>
<div class="t" style="left:583px;top:293.5px;font-size:17px;font-weight:700;color:#000">Сведения о сертификате</div>
<div class="a" style="left:534px;top:324px;width:486px;height:2px;background:#111"></div>
<div class="t" style="left:527px;top:343.5px;font-size:17px;font-weight:700;color:#000;line-height:19px">Нет доверия к этому корневому сертификату центра<br>сертификации. Чтобы включить  доверие, установите<br>этот сертификат в хранилище доверенных корневых<br>сертификатов центров сертификации.</div>
<div class="a" style="left:534px;top:524px;width:486px;height:2px;background:#111"></div>
<div class="t" style="left:529px;top:536.5px;font-size:16.6px;font-weight:700;color:#000">Кому выдан:</div>
<div class="t" style="left:682px;top:537px;font-size:16px;color:#000">trust_469fcc12-31cb-47ca-a092-791f83c3740b</div>
<div class="t" style="left:529px;top:598.5px;font-size:16.6px;font-weight:700;color:#000">Кем выдан:</div>
<div class="t" style="left:682px;top:599px;font-size:16px;color:#000">trust_469fcc12-31cb-47ca-a092-791f83c3740b</div>
<div class="t" style="left:567px;top:660px;font-size:16.8px;font-weight:700;color:#000">Действителен с</div>
<div class="t" style="left:710px;top:660px;font-size:16.9px;color:#000">11.01.2025</div>
<div class="t" style="left:804px;top:660px;font-size:16.8px;font-weight:700;color:#000">по</div>
<div class="t" style="left:835px;top:660px;font-size:16.9px;color:#000">11.01.2026</div>
<svg class="a" style="left:545px;top:692px" width="14" height="17" viewBox="0 0 14 17"><circle cx="7" cy="4.5" r="3.5" fill="#f0c040" stroke="#a07810" stroke-width="1"/><path d="M7 8v8M7 12h2.5M7 14.5h2" stroke="#a07810" stroke-width="1.4"/></svg>
<div class="t" style="left:565px;top:694.5px;font-size:16.1px;color:#000">Есть закрытый ключ для этого сертификата.</div>
<div class="a" style="left:829px;top:757px;width:212px;height:31px;background:#f9f9f9;border:1px solid #e0e0e0;border-radius:4px"></div>
<div class="t" style="left:829px;width:212px;top:765px;font-size:15.5px;color:#7a7a7a;text-align:center">Заявление поставщика</div>
<div class="a" style="left:957px;top:863px;width:111px;height:31px;background:#fdfdfd;border:1.5px solid #0067c0;border-radius:4px"></div>
<div class="t" style="left:957px;width:111px;top:869.5px;font-size:15px;color:#000;text-align:center">OK</div>


</div>
</body></html>
